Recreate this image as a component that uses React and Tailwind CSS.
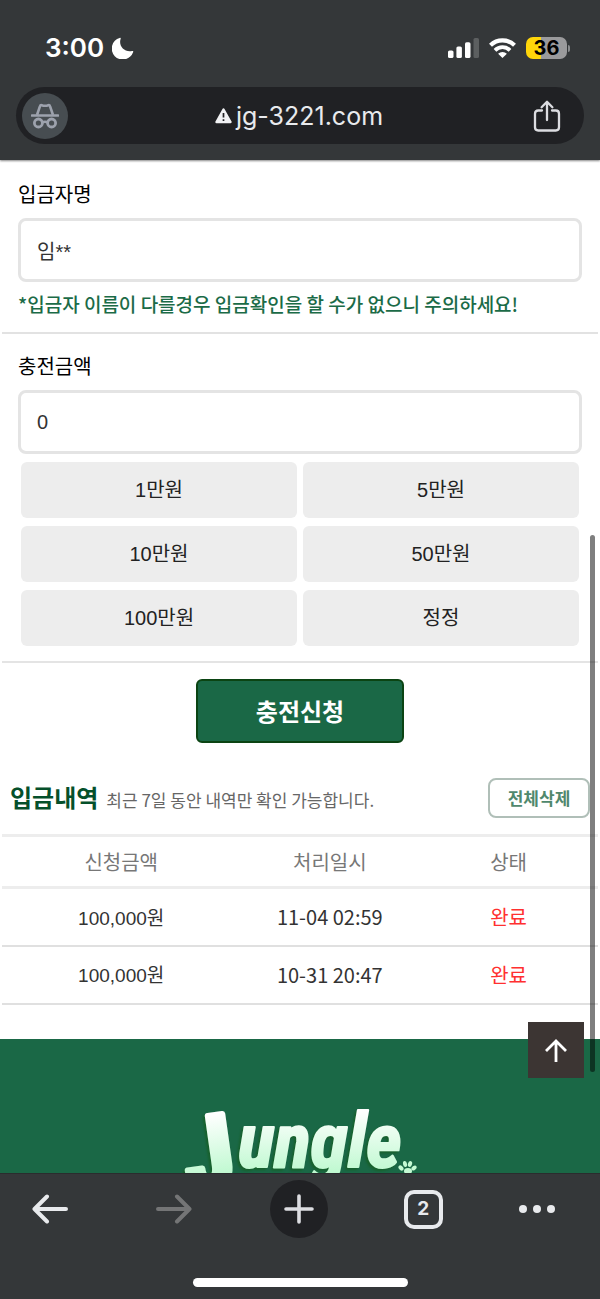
import { useState } from "react";

const amounts = [
  { label: "1만원", value: 10000 },
  { label: "5만원", value: 50000 },
  { label: "10만원", value: 100000 },
  { label: "50만원", value: 500000 },
  { label: "100만원", value: 1000000 },
  { label: "정정", value: 0 },
];

const deposits = [
  { amount: "100,000원", date: "11-04 02:59", status: "완료" },
  { amount: "100,000원", date: "10-31 20:47", status: "완료" },
];

function StatusBar() {
  return (
    <div className="flex items-center justify-between pt-[33px] pb-6 pl-[45px] pr-[30px] text-white">
      <div className="flex items-center gap-2">
        <span className="text-[26px] leading-[30px] font-semibold">3:00</span>
        <svg className="h-[22px] w-[22px]" viewBox="0 0 22 22" fill="currentColor" aria-hidden="true">
          <path d="M7.600 1C8.600.600 9 1 8.600 2 6.400 8.700 12 15.500 20 14c1.200-.300 1.600.200 1.100 1.200A11 11 0 1 1 7.600 1Z" />
        </svg>
      </div>
      <div className="flex items-center gap-[10px]">
        <svg className="h-5 w-[31px]" viewBox="0 0 31 20" fill="currentColor" aria-hidden="true">
          <rect x="0" y="12.500" width="5.500" height="7.500" rx="1.600" />
          <rect x="8.400" y="8.500" width="5.500" height="11.500" rx="1.600" />
          <rect x="17" y="4.200" width="5.500" height="15.800" rx="1.600" />
          <rect x="25.500" y="0" width="5.500" height="20" rx="1.600" opacity="0.2" />
        </svg>
        <svg className="h-5 w-[27px]" viewBox="0 0 27 20" fill="none" stroke="currentColor" aria-hidden="true">
          <path d="M1.500 7.300a17.200 17.200 0 0 1 24 0" strokeWidth="4.200" />
          <path d="M6 12.300a10.600 10.600 0 0 1 15 0" strokeWidth="3.800" />
          <path d="M13.500 20l-4.400-4.200a6 6 0 0 1 8.800 0z" fill="currentColor" stroke="none" />
        </svg>
        <div className="flex items-center gap-px">
          <div className="flex h-[22px] w-[41px] items-center justify-center rounded-[7px] bg-linear-to-r from-[#ffd60a] from-36% to-[#9a9a9c] to-36% text-[20px] leading-[22px] font-bold text-black">
            36
          </div>
          <div className="h-[7px] w-[2px] rounded-r-full bg-[#8a8c8e]"></div>
        </div>
      </div>
    </div>
  );
}

function AddressBar() {
  return (
    <div className="mx-4 flex h-[57px] items-center justify-between rounded-full bg-[#202124] pr-5 pl-[6px]">
      <div className="flex h-[46px] w-[46px] items-center justify-center rounded-full bg-[#474d51]">
        <svg className="h-[26px] w-7" viewBox="0 0 28 26" fill="none" stroke="#9da2ad" aria-hidden="true">
          <path d="M1 12.500h26" strokeWidth="2.600" strokeLinecap="round" />
          <path d="M6 12L9 3.200Q9.400 1.900 10.700 2.200Q14 3.400 17.300 2.200Q18.600 1.900 19 3.200L22 12" strokeWidth="2.600" />
          <circle cx="7.400" cy="20" r="4" strokeWidth="2.800" />
          <circle cx="20.600" cy="20" r="4" strokeWidth="2.800" />
          <path d="M11 19.500q3-1.600 6 0" strokeWidth="2.600" />
        </svg>
      </div>
      <div className="flex items-center gap-1 text-[25px] leading-[30px] text-[#e8eaed]">
        <svg className="h-4 w-[17px]" viewBox="0 0 17 16" aria-hidden="true">
          <path d="M8.500 1.500L15.500 14h-14z" fill="#f1f2f4" stroke="#f1f2f4" strokeWidth="2.400" strokeLinejoin="round" />
          <path d="M8.500 5v4.500M8.500 11.300v1.800" stroke="#202124" strokeWidth="1.700" />
        </svg>
        jg-3221.com
      </div>
      <button type="button" aria-label="공유" className="flex h-10 w-[34px] items-center justify-center">
        <svg className="h-8 w-7" viewBox="0 0 28 32" fill="none" stroke="#dcdde1" strokeWidth="2.300" strokeLinecap="round" strokeLinejoin="round" aria-hidden="true">
          <path d="M9 10.500H5.200Q2 10.500 2 13.700V27.300Q2 30.500 5.200 30.500H22.800Q26 30.500 26 27.300V13.700Q26 10.500 22.800 10.500H19" />
          <path d="M14 20V1.800M8.600 7.200L14 1.800L19.400 7.200" />
        </svg>
      </button>
    </div>
  );
}

function ChargeForm() {
  const [amount, setAmount] = useState(0);

  // 정정 버튼은 금액을 0으로 되돌린다
  const addAmount = (value) => {
    setAmount(value === 0 ? 0 : amount + value);
  };

  return (
    <form onSubmit={(e) => e.preventDefault()}>
      <div className="mx-[2px] flex flex-col border-b-2 border-[#e2e2e2] px-4 pt-[18px] pb-[6px]">
        <label htmlFor="depositor" className="mb-2 font-['Noto_Sans_CJK_KR',sans-serif] text-[20px] leading-8 text-black">
          입금자명
        </label>
        <input
          id="depositor"
          type="text"
          defaultValue="임**"
          className="h-16 w-full rounded-lg border-3 border-[#e4e4e4] bg-white px-4 text-[20px] text-[#333]"
        />
        <p className="font-['Noto_Sans_CJK_KR',sans-serif] text-[19px] leading-[44px] font-medium text-[#1b6b47]">
          *입금자 이름이 다를경우 입금확인을 할 수가 없으니 주의하세요!
        </p>
      </div>

      <div className="mx-[2px] flex flex-col border-b-2 border-[#e4e4e4] px-4 pt-4 pb-[15px]">
        <label htmlFor="amount" className="mb-2 font-['Noto_Sans_CJK_KR',sans-serif] text-[20px] leading-8 text-black">
          충전금액
        </label>
        <input
          id="amount"
          type="text"
          value={amount.toLocaleString()}
          onChange={(e) => setAmount(Number(e.target.value.replace(/\D/g, "")))}
          className="h-16 w-full rounded-lg border-3 border-[#e4e4e4] bg-white px-4 text-[20px] text-[#333]"
        />
        <div className="mx-[3px] mt-2 grid grid-cols-2 gap-x-[6px] gap-y-2">
          {amounts.map((item) => (
            <button
              key={item.label}
              type="button"
              onClick={() => addAmount(item.value)}
              className="h-14 rounded-md bg-[#ededed] text-[20px] text-[#222]"
            >
              {item.label}
            </button>
          ))}
        </div>
      </div>

      <div className="flex justify-center py-4">
        <button
          type="submit"
          className="h-16 w-[208px] rounded-md border-2 border-[#0b4413] bg-[#1a6846] font-['Noto_Sans_CJK_KR',sans-serif] text-[24px] font-bold text-white"
        >
          충전신청
        </button>
      </div>
    </form>
  );
}

function DepositHistory() {
  return (
    <section className="px-[2px] pt-[19px] pb-[34px]">
      <div className="mb-4 flex items-center justify-between px-2 font-['Noto_Sans_CJK_KR',sans-serif]">
        <div className="flex items-baseline gap-2">
          <h2 className="text-[24px] leading-9 font-bold text-[#05502b]">입금내역</h2>
          <span className="text-[17px] leading-9 text-[#666]">최근 7일 동안 내역만 확인 가능합니다.</span>
        </div>
        <button
          type="button"
          className="h-10 w-[102px] rounded-lg border-2 border-[#b0bfb8] text-[17px] font-bold text-[#4f886d]"
        >
          전체삭제
        </button>
      </div>
      <table className="w-full table-fixed border-collapse text-center">
        <thead>
          <tr className="h-[52px] border-y-3 border-[#ededed] font-['Noto_Sans_CJK_KR',sans-serif] text-[20px] text-[#777]">
            <th className="w-2/5 font-normal">신청금액</th>
            <th className="font-normal">처리일시</th>
            <th className="font-normal">상태</th>
          </tr>
        </thead>
        <tbody>
          {deposits.map((row) => (
            <tr key={row.date} className="h-[58px] border-b-2 border-[#e0e0e0] text-[#333]">
              <td className="pt-1 text-[19px]">{row.amount}</td>
              <td className="font-['Noto_Sans_CJK_KR',sans-serif] text-[20px]">{row.date}</td>
              <td className="font-['Noto_Sans_CJK_KR',sans-serif] text-[20px] text-[#ff3030]">{row.status}</td>
            </tr>
          ))}
        </tbody>
      </table>
    </section>
  );
}

function Logo() {
  return (
    <svg className="h-[110px] w-[240px] shrink-0" viewBox="0 0 240 110" role="img" aria-label="Jungle">
      <defs>
        <linearGradient id="leaf" gradientUnits="userSpaceOnUse" x1="0" y1="0" x2="0" y2="80">
          <stop offset="0.1" stopColor="#ffffff" />
          <stop offset="1" stopColor="#b4f8c8" />
        </linearGradient>
      </defs>
      <g
        fill="url(#leaf)"
        stroke="url(#leaf)"
        strokeLinejoin="round"
        className="font-['Roboto_Condensed','Liberation_Sans_Narrow','Liberation_Sans',sans-serif] font-bold drop-shadow-[-2px_2px_1px_#17602b]"
      >
        <text x="58" y="82" fontSize="102" textAnchor="end" strokeWidth="6" transform="rotate(-8 58 82)">J</text>
        <text x="58" y="64" fontSize="76" strokeWidth="2" className="italic">ungle</text>
      </g>
      <g fill="#c5fad4">
        <ellipse cx="221" cy="65" rx="2" ry="3" transform="rotate(-45 221 65)" />
        <ellipse cx="225" cy="61" rx="2" ry="3" transform="rotate(-10 225 61)" />
        <ellipse cx="230" cy="61" rx="2" ry="3" transform="rotate(20 230 61)" />
        <ellipse cx="234" cy="65" rx="2" ry="3" transform="rotate(55 234 65)" />
        <ellipse cx="228" cy="68" rx="4" ry="3" />
      </g>
    </svg>
  );
}

function BottomBar() {
  return (
    <nav className="flex flex-col items-center border-t border-[#2a2c2e] bg-[#343739] pt-[6px] pb-3">
      <div className="mb-10 flex w-full items-center justify-between px-[22px]">
        <button type="button" aria-label="뒤로" className="flex h-14 w-14 items-center justify-center">
          <svg className="h-8 w-9" viewBox="0 0 36 32" fill="none" stroke="#e8eaed" strokeWidth="4" strokeLinecap="round" strokeLinejoin="round" aria-hidden="true">
            <path d="M34 16H2.500M15 3.500L2.500 16L15 28.500" />
          </svg>
        </button>
        <button type="button" aria-label="앞으로" className="flex h-14 w-14 items-center justify-center">
          <svg className="h-8 w-9" viewBox="0 0 36 32" fill="none" stroke="#747576" strokeWidth="4" strokeLinecap="round" strokeLinejoin="round" aria-hidden="true">
            <path d="M2 16H33.500M21 3.500L33.500 16L21 28.500" />
          </svg>
        </button>
        <button type="button" aria-label="새 탭" className="flex h-[58px] w-[58px] items-center justify-center rounded-full bg-[#202124]">
          <svg className="h-[30px] w-[30px]" viewBox="0 0 30 30" stroke="#dddee2" strokeWidth="3.600" strokeLinecap="round" aria-hidden="true">
            <path d="M15 2v26M2 15h26" />
          </svg>
        </button>
        <button type="button" aria-label="탭 2개" className="flex h-14 w-14 items-center justify-center">
          <span className="flex h-[39px] w-[39px] items-center justify-center rounded-[10px] border-4 border-[#e8eaed] text-[19px] leading-[20px] font-bold text-[#e8eaed]">
            2
          </span>
        </button>
        <button type="button" aria-label="메뉴" className="flex h-14 w-[59px] items-center justify-start">
          <svg className="h-2 w-9" viewBox="0 0 36 8" fill="#e8eaed" aria-hidden="true">
            <circle cx="4" cy="4" r="4" />
            <circle cx="18" cy="4" r="4" />
            <circle cx="32" cy="4" r="4" />
          </svg>
        </button>
      </div>
      <div className="h-[9px] w-[215px] rounded-full bg-white"></div>
    </nav>
  );
}

function App() {
  return (
    <div className="flex min-h-screen flex-col bg-white font-['Inter',sans-serif]">
      <header className="bg-[#343739] pb-4 shadow-[0_1px_2px_#888]">
        <StatusBar />
        <AddressBar />
      </header>

      <div className="relative flex flex-1 flex-col font-['Liberation_Sans','Noto_Sans_CJK_KR',sans-serif]">
        <main>
          <ChargeForm />
          <DepositHistory />
        </main>
        <footer className="relative flex-1 bg-[#1a6846]">
          <div className="flex h-[134px] items-start justify-center overflow-hidden pt-16">
            <Logo />
          </div>
          <button
            type="button"
            aria-label="맨 위로"
            className="absolute -top-[17px] right-4 flex h-14 w-14 items-center justify-center bg-[#3c3533]"
          >
            <svg className="h-6 w-6" viewBox="0 0 24 24" fill="none" stroke="#fff" strokeWidth="2.800" aria-hidden="true">
              <path d="M12 24V3M2 13L12 3L22 13" />
            </svg>
          </button>
        </footer>
        {/* Scroll thumb */}
        <div className="absolute top-[37%] right-[5px] h-[53%] w-[5px] rounded-full bg-black/50"></div>
      </div>

      <BottomBar />
    </div>
  );
}

export default App;
